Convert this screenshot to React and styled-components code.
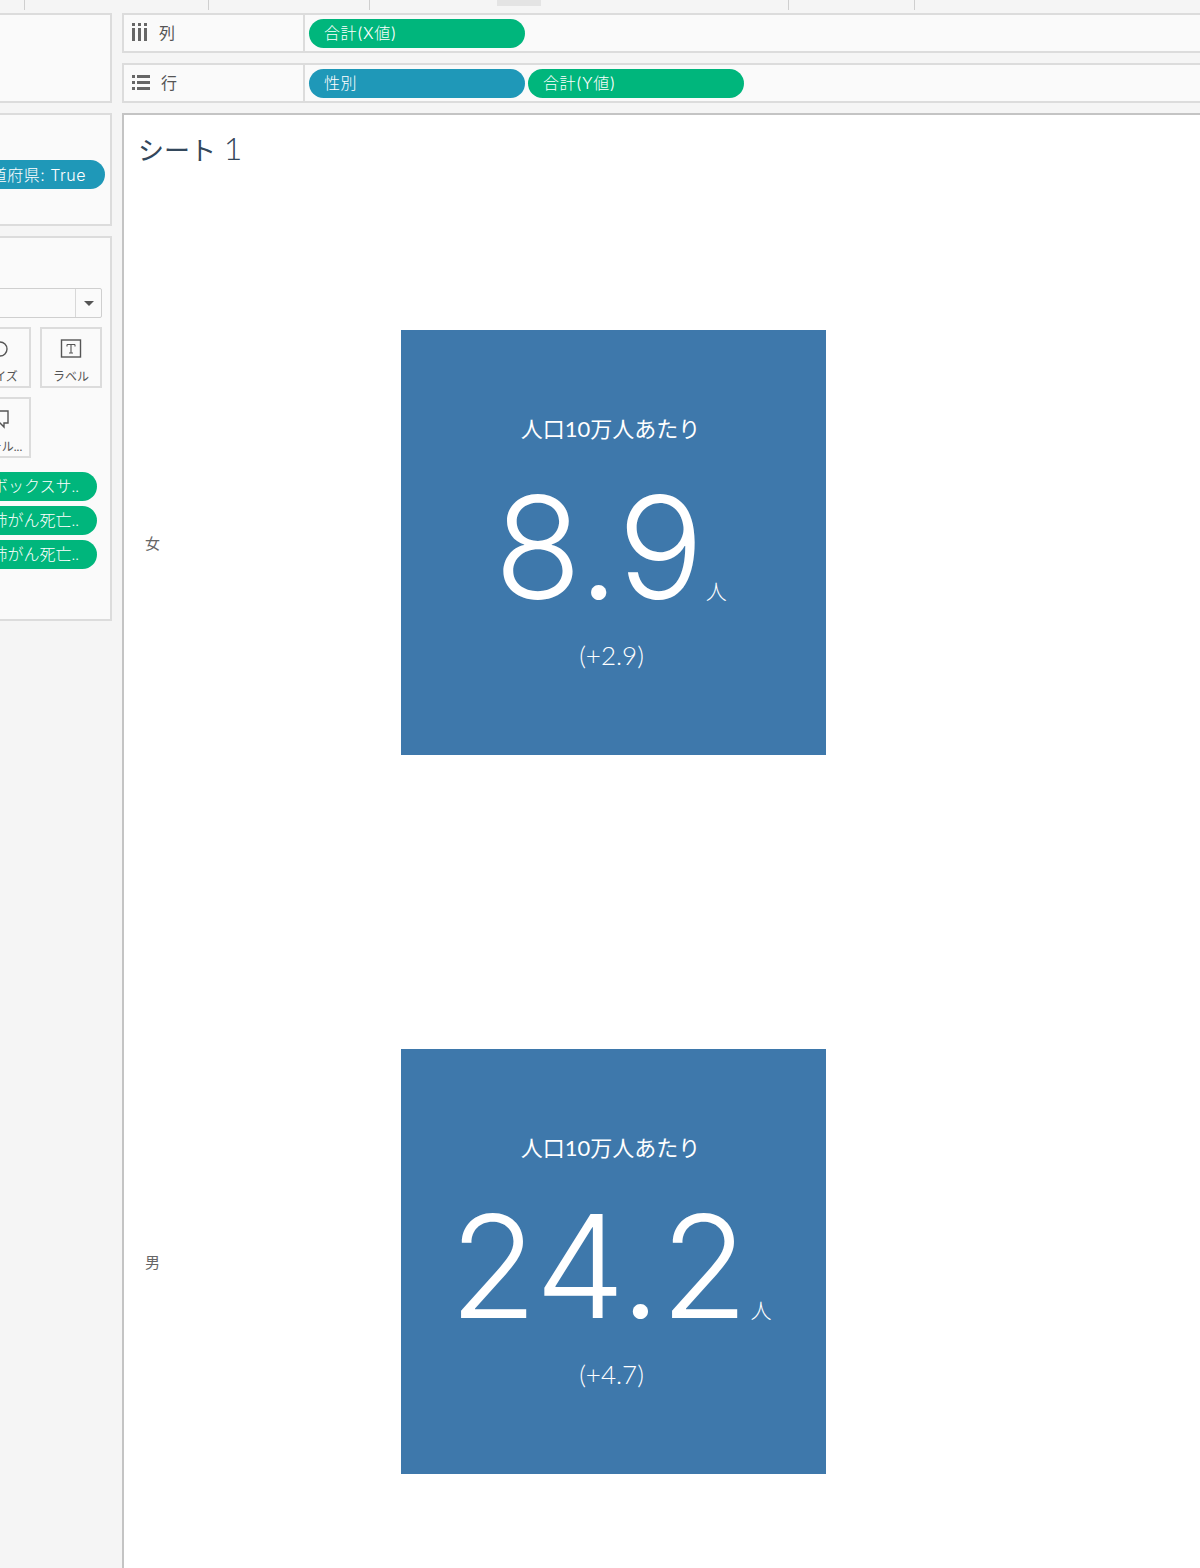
import React from 'react';
import styled, { createGlobalStyle } from 'styled-components';

const GlobalStyle = createGlobalStyle`
  html, body {
    margin: 0;
    padding: 0;
    height: 1568px;
    overflow: hidden;
    background: #f5f5f5;
  }
  * { box-sizing: border-box; }
  body {
    font-family: "Lato", "Noto Sans CJK JP", sans-serif;
  }
`;

const Page = styled.div`
  width: 1200px;
  height: 1568px;
  overflow: hidden;
  display: flex;
  flex-direction: column;
`;

const TopStrip = styled.div`
  height: 13px;
  display: flex;
  flex: none;
`;

const TopCell = styled.div`
  width: ${p => p.$w}px;
  height: 10px;
  flex: none;
  border-right: ${p => (p.$tick ? '1px solid #cfcfcf' : 'none')};
`;

const ActiveTab = styled.div`
  width: 44px;
  height: 6px;
  flex: none;
  background: #e4e4e4;
`;

const Body = styled.div`
  flex: 1;
  min-height: 0;
  display: grid;
  grid-template-columns: 112px 1fr;
  column-gap: 10px;
`;

const Side = styled.div`
  display: flex;
  flex-direction: column;
  gap: 10px;
  margin-left: -12px;
  width: 124px;
`;

const SideCard = styled.div`
  height: ${p => p.$h}px;
  flex: none;
  background: #fafafa;
  border: 2px solid #dcdcdc;
  overflow: hidden;
`;

const FilterPill = styled.div`
  margin: 45px 5px 0 -20px;
  height: 29px;
  border-radius: 15px;
  background: #1f98b8;
  color: #fff;
  font-family: "Inter", "Noto Sans CJK JP", sans-serif;
  font-size: 16px;
  font-weight: 300;
  letter-spacing: 0.5px;
  line-height: 30px;
  white-space: nowrap;
  text-align: right;
  padding-right: 19px;
`;

const MarksInner = styled.div`
  display: flex;
  flex-direction: column;
  align-items: flex-end;
  padding: 50px 8px 0 0;
`;

const MarkSelect = styled.div`
  width: 130px;
  height: 30px;
  background: #fafafa;
  border: 1px solid #cfcfcf;
  border-radius: 2px;
  display: flex;
  justify-content: flex-end;
`;

const SelectArrow = styled.div`
  width: 26px;
  border-left: 1px solid #d8d8d8;
  display: flex;
  align-items: center;
  justify-content: center;
  &::after {
    content: '';
    border-left: 5px solid transparent;
    border-right: 5px solid transparent;
    border-top: 5px solid #555;
  }
`;

const MarkGrid = styled.div`
  display: grid;
  grid-template-columns: 62px 62px;
  column-gap: 9px;
  row-gap: 9px;
  margin-top: 9px;
  width: 133px;
`;

const MarkButton = styled.div`
  height: 61px;
  border: 2px solid #dcdcdc;
  display: flex;
  flex-direction: column;
  align-items: center;
  overflow: hidden;
`;

const MarkIcon = styled.svg`
  width: 24px;
  height: 22px;
  margin-top: 9px;
  flex: none;
`;

const MarkLabel = styled.div`
  margin-top: 9px;
  font-size: 12px;
  line-height: 16px;
  color: #555;
  white-space: nowrap;
`;

const MarkPills = styled.div`
  margin-top: 14px;
  width: 125px;
  margin-right: 5px;
  display: flex;
  flex-direction: column;
  gap: 5px;
`;

const MarkPill = styled.div`
  height: 29px;
  border-radius: 15px;
  background: #00b67c;
  color: #fff;
  font-size: 16px;
  font-weight: 300;
  line-height: 28px;
  white-space: nowrap;
  text-align: right;
  padding-right: 18px;
`;

const Main = styled.div`
  display: flex;
  flex-direction: column;
  gap: 10px;
  min-width: 0;
`;

const Shelf = styled.div`
  height: 40px;
  flex: none;
  display: flex;
  background: #fafafa;
  border-top: 2px solid #dcdcdc;
  border-left: 2px solid #dcdcdc;
  border-bottom: 2px solid #dcdcdc;
`;

const ShelfHead = styled.div`
  width: 181px;
  flex: none;
  display: flex;
  align-items: center;
  gap: 11px;
  padding: 0 0 2px 8px;
  border-right: 2px solid #dcdcdc;
  color: #555;
  font-size: 16px;
`;

const ShelfBody = styled.div`
  display: flex;
  align-items: center;
  gap: 3px;
  padding-left: 4px;
`;

const ShelfPill = styled.div`
  width: 216px;
  height: 29px;
  border-radius: 15px;
  background: ${p => (p.$kind === 'dim' ? '#1f98b8' : '#00b67c')};
  color: #fff;
  font-family: "Inter", "Noto Sans CJK JP", sans-serif;
  font-size: 16px;
  font-weight: 300;
  letter-spacing: 0.5px;
  line-height: 28px;
  padding-left: 15px;
  white-space: nowrap;
`;

const Canvas = styled.div`
  flex: 1;
  min-height: 0;
  background: #fff;
  border-top: 2px solid #c4c4c4;
  border-left: 2px solid #c4c4c4;
  overflow: hidden;
`;

const SheetTitle = styled.div`
  height: 67.5px;
  padding: 13px 0 0 14px;
  color: #33475b;
  font-size: 26px;
  line-height: 40px;
`;

const SheetNumber = styled.span`
  font-size: 32px;
  font-weight: 300;
  margin-left: 1px;
`;

const ViewRow = styled.div`
  height: 719px;
  display: grid;
  grid-template-columns: 277px 425px;
  align-items: center;
`;

const RowLabel = styled.div`
  padding-left: 21px;
  color: #666;
  font-size: 15px;
`;

const Tile = styled.div`
  width: 425px;
  height: 425px;
  background: #3e78ab;
  color: #fff;
  display: flex;
  flex-direction: column;
  align-items: center;
`;

const TileCaption = styled.div`
  margin-top: 83px;
  margin-left: -6px;
  height: 32px;
  font-size: 22px;
  line-height: 32px;
`;

const TileValue = styled.div`
  margin-top: 27px;
  height: 150px;
  padding-right: 6px;
  display: flex;
  align-items: baseline;
  font-family: "Inter", "Noto Sans CJK JP", sans-serif;
  line-height: 150px;
  font-weight: 300;
  font-size: 143px;
  white-space: nowrap;
`;

const TileUnit = styled.span`
  font-size: 21px;
  margin-left: 2px;
`;

const TileDelta = styled.div`
  margin-top: 17px;
  margin-left: -4px;
  font-size: 26px;
  line-height: 32px;
  font-weight: 300;
`;

const tiles = [
  { label: '女', value: '8.9', delta: '(+2.9)' },
  { label: '男', value: '24.2', delta: '(+4.7)' },
];

const ColumnsIcon = () => (
  <svg width="16" height="18" viewBox="0 0 16 18" fill="#666">
    <rect x="0" y="0" width="3" height="3" />
    <rect x="6" y="0" width="3" height="3" />
    <rect x="12" y="0" width="3" height="3" />
    <rect x="0" y="5" width="3" height="13" />
    <rect x="6" y="5" width="3" height="13" />
    <rect x="12" y="5" width="3" height="13" />
  </svg>
);

const RowsIcon = () => (
  <svg width="18" height="15" viewBox="0 0 18 15" fill="#666">
    <rect x="0" y="0" width="3" height="3" />
    <rect x="5" y="0" width="13" height="3" />
    <rect x="0" y="6" width="3" height="3" />
    <rect x="5" y="6" width="13" height="3" />
    <rect x="0" y="12" width="3" height="3" />
    <rect x="5" y="12" width="13" height="3" />
  </svg>
);

const App = () => (
  <Page>
    <GlobalStyle />
    <TopStrip>
      <TopCell $w={25} $tick />
      <TopCell $w={184} $tick />
      <TopCell $w={161} $tick />
      <TopCell $w={127} />
      <ActiveTab />
      <TopCell $w={248} $tick />
      <TopCell $w={126} $tick />
    </TopStrip>
    <Body>
      <Side>
        <SideCard $h={90} />
        <SideCard $h={113}>
          <FilterPill>都道府県: True</FilterPill>
        </SideCard>
        <SideCard $h={385}>
          <MarksInner>
            <MarkSelect><SelectArrow /></MarkSelect>
            <MarkGrid>
              <MarkButton>
                <MarkIcon viewBox="0 0 24 22" fill="none" stroke="#555" strokeWidth="1.4">
                  <circle cx="12" cy="11" r="7" />
                </MarkIcon>
                <MarkLabel>サイズ</MarkLabel>
              </MarkButton>
              <MarkButton>
                <MarkIcon viewBox="0 0 24 22" fill="none" stroke="#555" strokeWidth="1.4">
                  <rect x="2.5" y="2" width="19" height="17" />
                  <path d="M8 6.5h8M8 6.5v2M16 6.5v2M12 6.5v8.5M10 15h4" strokeWidth="1.1" />
                </MarkIcon>
                <MarkLabel>ラベル</MarkLabel>
              </MarkButton>
              <MarkButton>
                <MarkIcon viewBox="0 0 24 22" fill="none" stroke="#555" strokeWidth="1.4">
                  <path d="M4 3h16v12h-4v4l-4-4H4z" />
                </MarkIcon>
                <MarkLabel>ツール...</MarkLabel>
              </MarkButton>
            </MarkGrid>
            <MarkPills>
              <MarkPill>ボックスサ..</MarkPill>
              <MarkPill>肺がん死亡..</MarkPill>
              <MarkPill>肺がん死亡..</MarkPill>
            </MarkPills>
          </MarksInner>
        </SideCard>
      </Side>
      <Main>
        <Shelf>
          <ShelfHead><ColumnsIcon />列</ShelfHead>
          <ShelfBody>
            <ShelfPill>合計(X値)</ShelfPill>
          </ShelfBody>
        </Shelf>
        <Shelf>
          <ShelfHead><RowsIcon />行</ShelfHead>
          <ShelfBody>
            <ShelfPill $kind="dim">性別</ShelfPill>
            <ShelfPill>合計(Y値)</ShelfPill>
          </ShelfBody>
        </Shelf>
        <Canvas>
          <SheetTitle>シート <SheetNumber>1</SheetNumber></SheetTitle>
          {tiles.map(t => (
            <ViewRow key={t.label}>
              <RowLabel>{t.label}</RowLabel>
              <Tile>
                <TileCaption>人口10万人あたり</TileCaption>
                <TileValue>
                  {t.value}
                  <TileUnit>人</TileUnit>
                </TileValue>
                <TileDelta>{t.delta}</TileDelta>
              </Tile>
            </ViewRow>
          ))}
        </Canvas>
      </Main>
    </Body>
  </Page>
);

export default App;
